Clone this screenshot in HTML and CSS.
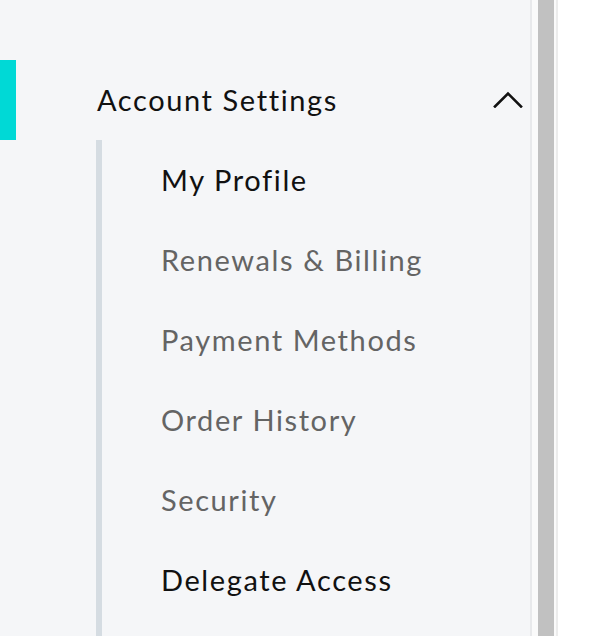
FILE: index.html
```html
<!DOCTYPE html>
<html lang="en">
<head>
    <meta charset="UTF-8">
    <meta name="viewport" content="width=device-width, initial-scale=1.0">
    <title>Account Settings</title>
    <link rel="stylesheet" href="styles.css">
</head>
<body>
    <div class="page">
        <nav class="sidebar">
            <div class="section-header">
                <span class="indicator"></span>
                <span class="section-title">Account Settings</span>
                <svg class="chevron" width="30" height="17" viewBox="0 0 30 17">
                    <polyline points="2,15.5 15,2.5 28,15.5" fill="none" stroke="#111" stroke-width="2.6" stroke-linecap="square"/>
                </svg>
            </div>

            <ul class="sub-list">
                <li class="sub-item active">My Profile</li>
                <li class="sub-item">Renewals &amp; Billing</li>
                <li class="sub-item">Payment Methods</li>
                <li class="sub-item">Order History</li>
                <li class="sub-item">Security</li>
                <li class="sub-item active">Delegate Access</li>
            </ul>
        </nav>

        <div class="scroll-track">
            <div class="scroll-thumb"></div>
        </div>

        <div class="content"></div>
    </div>
</body>
</html>
```

FILE: styles.css
```css
/* layout */
html, body {
    height: 100%;
}

body {
    margin: 0;
    font-family: Lato, "Noto Sans", sans-serif;
    background: #fff;
    color: #111;
    overflow: hidden;
}

.page {
    display: flex;
    height: 100%;
}

.sidebar {
    width: 530px;
    flex-shrink: 0;
    background: #f5f6f8;
    border-right: 2px solid #e8e9eb;
    padding-top: 60px;
    display: flex;
    flex-direction: column;
}

.section-header {
    display: flex;
    align-items: center;
    height: 80px;
}

.indicator {
    width: 16px;
    height: 80px;
    background: #00d9d6;
}

.section-title {
    margin-left: 81px;
    margin-bottom: 2px;
    flex: 1;
    font-size: 29px;
    letter-spacing: 1.6px;
    color: #111;
}

.chevron {
    margin-right: 7px;
    margin-top: -2px;
}

.sub-list {
    list-style: none;
    margin: 0 0 0 96px;
    padding: 0;
    flex: 1;
    border-left: 6px solid #d5dce2;
}

.sub-item {
    height: 80px;
    box-sizing: border-box;
    display: flex;
    align-items: center;
    padding-left: 59px;
    padding-bottom: 2px;
    font-size: 29px;
    letter-spacing: 1.6px;
    color: #646464;
}

.sub-item.active {
    color: #111;
}

/* fake scrollbar */
.scroll-track {
    width: 26px;
    flex-shrink: 0;
    background: #fafafa;
    border-right: 2px solid #ececec;
    padding-left: 6px;
    box-sizing: border-box;
}

.scroll-thumb {
    width: 16px;
    height: 100%;
    background: #c1c1c1;
}

.content {
    flex: 1;
    background: #fff;
}
```
